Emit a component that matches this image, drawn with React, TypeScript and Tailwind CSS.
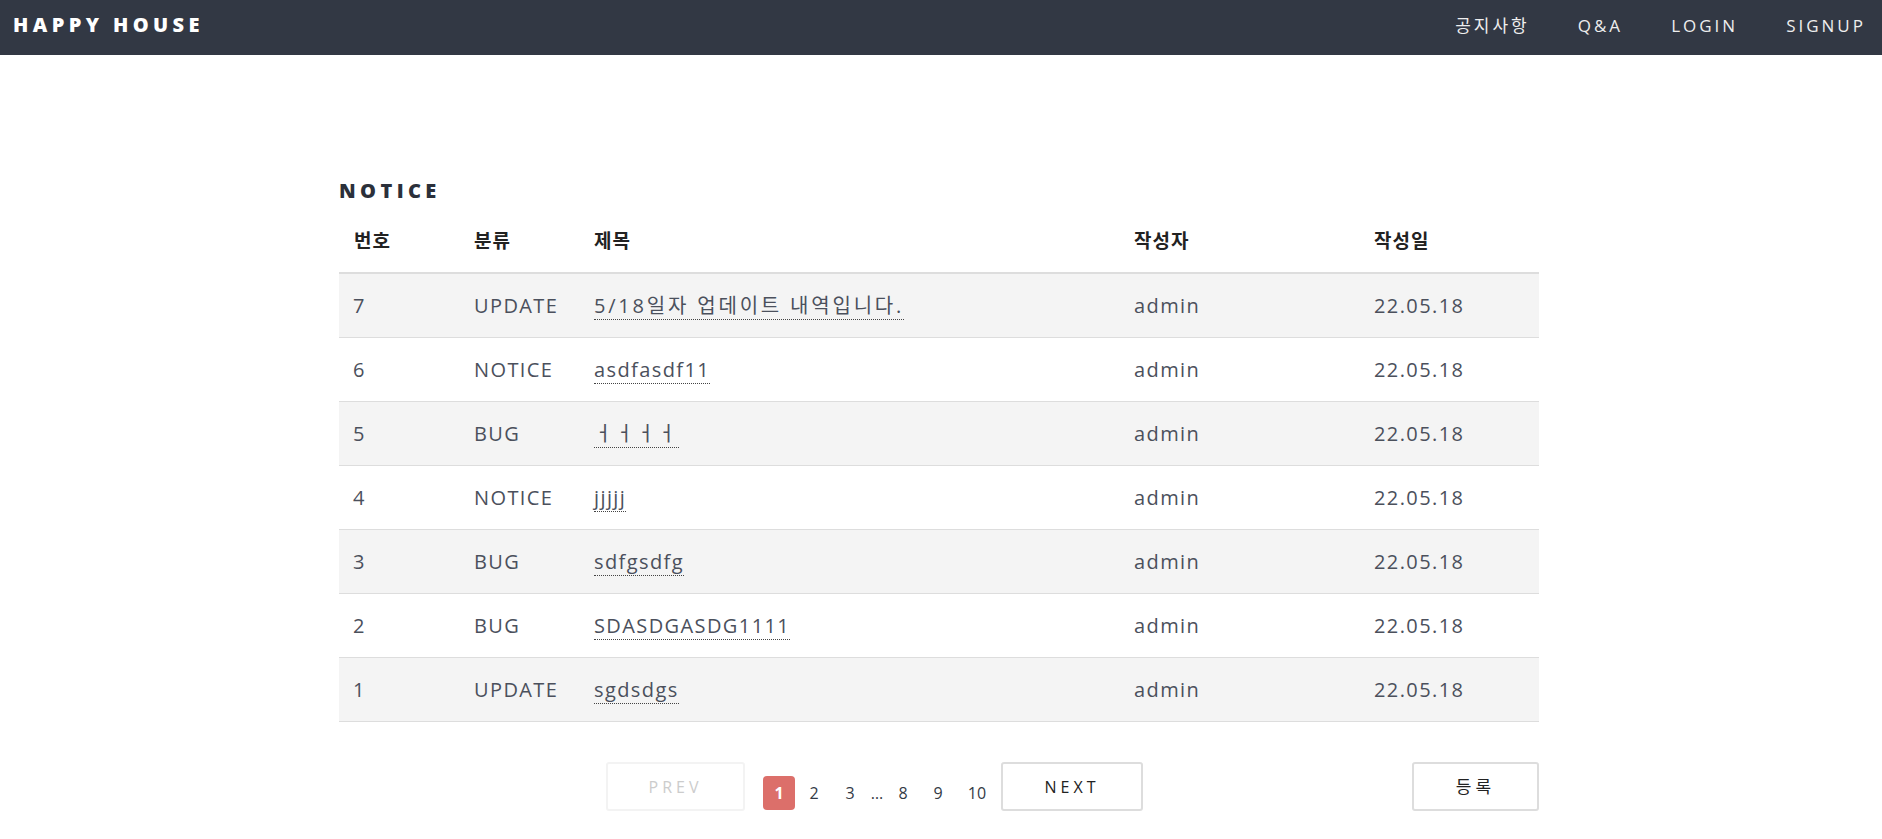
import React from "react";

const FONT = { fontFamily: '"Open Sans", "Noto Sans CJK KR", sans-serif' };

const rows = [
  { no: 7, cat: "UPDATE", title: "5/18일자 업데이트 내역입니다.", ko: true, writer: "admin", date: "22.05.18" },
  { no: 6, cat: "NOTICE", title: "asdfasdf11", ko: false, writer: "admin", date: "22.05.18" },
  { no: 5, cat: "BUG", title: "ㅓㅓㅓㅓ", ko: true, writer: "admin", date: "22.05.18" },
  { no: 4, cat: "NOTICE", title: "jjjjj", ko: false, writer: "admin", date: "22.05.18" },
  { no: 3, cat: "BUG", title: "sdfgsdfg", ko: false, writer: "admin", date: "22.05.18" },
  { no: 2, cat: "BUG", title: "SDASDGASDG1111", ko: false, writer: "admin", date: "22.05.18" },
  { no: 1, cat: "UPDATE", title: "sgdsdgs", ko: false, writer: "admin", date: "22.05.18" },
];

function Navbar() {
  return (
    <header className="h-[55px] bg-[#323844] flex items-center justify-between">
      {/* logo */}
      <div className="pl-[13px] pb-[6px] text-[20px] font-extrabold tracking-[4.4px] text-white">
        HAPPY HOUSE
      </div>

      {/* menu */}
      <nav className="flex items-center gap-[48px] pr-[16px] pb-[4px] text-[17px] font-normal tracking-[3px] text-[#eeeeee]">
        <a className="cursor-pointer">공지사항</a>
        <a className="cursor-pointer">Q&amp;A</a>
        <a className="cursor-pointer">LOGIN</a>
        <a className="cursor-pointer">SIGNUP</a>
      </nav>
    </header>
  );
}

function NoticeTable() {
  return (
    <div className="w-full">
      {/* head */}
      <div className="h-[63px] flex items-center border-b-2 border-[#dddddd] text-[19px] font-bold text-[#222222] tracking-[1px]">
        <div className="w-[120px] pl-[15px]">번호</div>
        <div className="w-[120px] pl-[15px]">분류</div>
        <div className="w-[540px] pl-[15px]">제목</div>
        <div className="w-[240px] pl-[15px]">작성자</div>
        <div className="flex-1 pl-[15px]">작성일</div>
      </div>

      {/* body */}
      {rows.map((r, i) => (
        <div
          key={r.no}
          className={`h-[64px] flex items-center border-b border-[#dddddd] text-[20px] tracking-[1.4px] text-[#4b505c] ${
            i % 2 === 0 ? "bg-[#f4f4f4]" : "bg-white"
          }`}
        >
          <div className="w-[120px] pl-[14px]">{r.no}</div>
          <div className="w-[120px] pl-[15px]">{r.cat}</div>
          <div className="w-[540px] pl-[15px]">
            <span
              className={`border-b border-dotted border-[#444444] cursor-pointer ${
                r.ko ? "tracking-[2.8px]" : ""
              }`}
            >
              {r.title}
            </span>
          </div>
          <div className="w-[240px] pl-[15px]">{r.writer}</div>
          <div className="flex-1 pl-[15px]">{r.date}</div>
        </div>
      ))}
    </div>
  );
}

function Pagination() {
  return (
    <div className="flex items-start mt-[40px]">
      <div className="ml-[267px] flex items-start">
        <button
          type="button"
          className="w-[139px] h-[49px] border-2 border-[#f3f3f3] rounded-[3px] text-[16px] tracking-[4px] text-[#cccccc] flex items-center justify-center"
        >
          PREV
        </button>

        <div className="flex items-center mt-[14px] ml-[18px] text-[16px] text-[#333a45]">
          <span className="w-[32px] h-[34px] rounded-[4px] bg-[#dc6f6a] text-white font-bold flex items-center justify-center">
            1
          </span>
          <span className="w-[38px] text-center">2</span>
          <span className="w-[34px] text-center">3</span>
          <span className="w-[20px] text-center">…</span>
          <span className="w-[32px] text-center">8</span>
          <span className="w-[38px] text-center">9</span>
          <span className="w-[40px] text-center">10</span>
        </div>

        <button
          type="button"
          className="ml-[4px] w-[142px] h-[49px] border-2 border-[#dddddd] rounded-[3px] text-[16px] tracking-[4px] text-[#222222] flex items-center justify-center"
        >
          NEXT
        </button>
      </div>

      <button
        type="button"
        className="ml-auto w-[127px] h-[49px] border-2 border-[#dddddd] rounded-[3px] text-[17px] tracking-[4px] text-[#222222] flex items-center justify-center"
      >
        등록
      </button>
    </div>
  );
}

export default function App() {
  return (
    <div className="min-h-screen bg-white" style={FONT}>
      <Navbar />

      <div className="flex justify-center pr-[4px]">
        <main className="w-[1200px] pt-[122px] pb-[30px]">
          <h2 className="h-[28px] mb-[6px] flex items-center text-[20px] font-extrabold tracking-[4.4px] text-[#2b303a]">
            NOTICE
          </h2>
          <NoticeTable />
          <Pagination />
        </main>
      </div>
    </div>
  );
}
